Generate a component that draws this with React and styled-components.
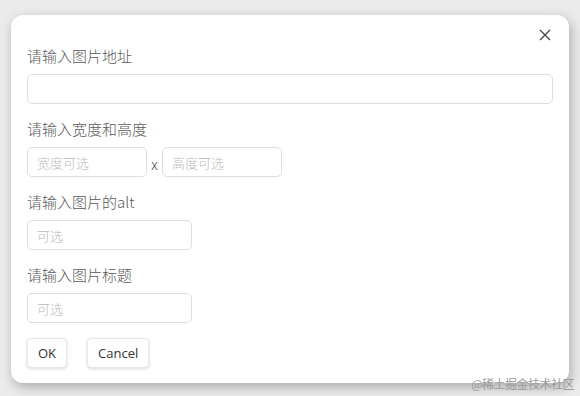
import styled, {createGlobalStyle} from "styled-components";

const Global = createGlobalStyle`
  html, body {
    margin: 0;
    padding: 0;
    background: #ebebeb;
    font-family: "Noto Sans CJK SC", "Noto Sans", sans-serif;
  }
  * { box-sizing: border-box; }
`;

function App() {
    return (
        <Page>
            <Global/>
            <Modal>
                <Header>
                    <Close aria-label="close">
                        <svg width="12" height="12" viewBox="0 0 12 12">
                            <path d="M1 1 L11 11 M11 1 L1 11" stroke="#444" strokeWidth="1.3" fill="none"/>
                        </svg>
                    </Close>
                </Header>
                <Field>
                    <Label>请输入图片地址</Label>
                    <Input/>
                </Field>
                <Field>
                    <Label>请输入宽度和高度</Label>
                    <SizeRow>
                        <Input $w={120} placeholder="宽度可选"/>
                        <Times>x</Times>
                        <Input $w={120} placeholder="高度可选"/>
                    </SizeRow>
                </Field>
                <Field>
                    <Label>请输入图片的alt</Label>
                    <Input $w={165} placeholder="可选"/>
                </Field>
                <Field>
                    <Label>请输入图片标题</Label>
                    <Input $w={165} placeholder="可选"/>
                </Field>
                <Actions>
                    <Button>OK</Button>
                    <Button>Cancel</Button>
                </Actions>
            </Modal>
            <Mark>@稀土掘金技术社区</Mark>
        </Page>
    );
}

const Page = styled.div`
  position: relative;
  width: 580px;
  height: 396px;
  padding: 15px 11px 0;
  overflow: hidden;
`;
const Modal = styled.div`
  width: 558px;
  background: #fff;
  border-radius: 12px;
  padding: 0 16px 15px;
  box-shadow: 2px 4px 12px rgba(0, 0, 0, 0.28);
`;
const Header = styled.div`
  display: flex;
  justify-content: flex-end;
  height: 31px;
  padding-top: 8px;
`;
const Close = styled.button`
  width: 24px;
  height: 24px;
  margin-right: -4px;
  border: none;
  background: none;
  padding: 0;
  display: flex;
  align-items: center;
  justify-content: center;
  cursor: pointer;
`;
const Field = styled.div`
  display: flex;
  flex-direction: column;
  align-items: flex-start;
  margin-bottom: 15px;
`;
const Label = styled.div`
  font-size: 15px;
  font-weight: 300;
  line-height: 20px;
  color: #5a5a5a;
  margin-bottom: 8px;
`;
const Input = styled.input`
  width: ${p => p.$w ? p.$w + 'px' : '100%'};
  height: 30px;
  border: 1px solid #dedede;
  border-radius: 5px;
  padding: 0 9px;
  font-family: inherit;
  font-size: 13px;
  font-weight: 300;
  color: #333;
  outline: none;
  &::placeholder { color: #bbb; }
`;
const SizeRow = styled.div`
  display: flex;
  align-items: center;
  gap: 4px;
`;
const Times = styled.span`
  font-size: 14px;
  font-weight: 300;
  color: #444;
  width: 7px;
  text-align: center;
  padding-top: 3px;
`;
const Actions = styled.div`
  display: flex;
  gap: 20px;
`;
const Button = styled.button`
  height: 30px;
  padding: 0 10px;
  background: #fff;
  border: 1px solid #e6e6e6;
  border-radius: 4px;
  box-shadow: 0 1px 3px rgba(0, 0, 0, 0.15);
  font-family: "Open Sans", "Noto Sans CJK SC", sans-serif;
  font-size: 13px;
  color: #333;
  cursor: pointer;
`;
const Mark = styled.div`
  position: absolute;
  right: 6px;
  bottom: 4px;
  font-size: 12px;
  color: #9a9a9a;
  font-family: "Noto Sans CJK SC", serif;
  letter-spacing: -0.5px;
`;

export default App;
